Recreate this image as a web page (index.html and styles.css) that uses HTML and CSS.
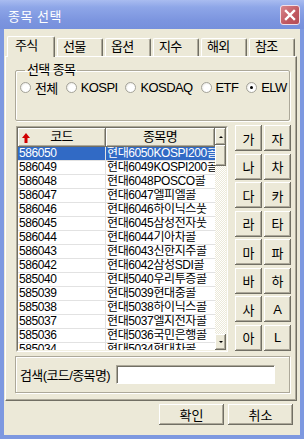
FILE: index.html
```html
<!DOCTYPE html>
<html lang="ko">
<head>
  <meta charset="UTF-8" />
  <meta name="viewport" content="width=device-width, initial-scale=1.0"/>
  <title>종목 선택</title>
  <link rel="stylesheet" href="styles.css">
</head>
<body>
<div class="window">
  <div class="titlebar">
    <span class="title">종목 선택</span>
    <span class="close">
      <svg width="12" height="12" viewBox="0 0 12 12"><path d="M2 2L10 10M10 2L2 10" stroke="#fff" stroke-width="2.4" stroke-linecap="square"/></svg>
    </span>
  </div>

  <div class="client">
    <div class="tabs">
      <div class="tab active">주식</div>
      <div class="tab">선물</div>
      <div class="tab">옵션</div>
      <div class="tab">지수</div>
      <div class="tab">해외</div>
      <div class="tab">참조</div>
    </div>

    <div class="panel">
      <fieldset class="group">
        <legend>선택 종목</legend>
        <div class="radios">
          <label class="radio"><span class="dot"></span>전체</label>
          <label class="radio"><span class="dot"></span>KOSPI</label>
          <label class="radio"><span class="dot"></span>KOSDAQ</label>
          <label class="radio"><span class="dot"></span>ETF</label>
          <label class="radio"><span class="dot on"></span>ELW</label>
        </div>
      </fieldset>

      <div class="list-area">
        <div class="list">
          <div class="list-inner">
            <div class="grid">
              <div class="head">
                <div class="hcell code">
                  <svg class="sort" width="8" height="10" viewBox="0 0 8 10"><path d="M4 0L8 5H5.5V10H2.5V5H0Z" fill="#d00000"/></svg>
                  코드
                </div>
                <div class="hcell name">종목명</div>
              </div>
              <div class="rows" id="rows"></div>
            </div>
            <div class="vscroll">
              <div class="sbtn up"></div>
              <div class="thumb"></div>
              <div class="track"></div>
              <div class="sbtn down"></div>
            </div>
          </div>
        </div>
        <div class="keys" id="keys"></div>
      </div>

      <div class="search">
        <span class="search-label">검색(코드/종목명)</span>
        <input type="text" class="search-input">
      </div>
    </div>

    <div class="actions">
      <button class="btn">확인</button>
      <button class="btn">취소</button>
    </div>
  </div>
</div>

<script>
  const items = [
    ['586050', '현대6050KOSPI200콜'],
    ['586049', '현대6049KOSPI200콜'],
    ['586048', '현대6048POSCO콜'],
    ['586047', '현대6047엘피엘콜'],
    ['586046', '현대6046하이닉스풋'],
    ['586045', '현대6045삼성전자풋'],
    ['586044', '현대6044기아차콜'],
    ['586043', '현대6043신한지주콜'],
    ['586042', '현대6042삼성SDI콜'],
    ['585040', '현대5040우리투증콜'],
    ['585039', '현대5039현대중콜'],
    ['585038', '현대5038하이닉스콜'],
    ['585037', '현대5037엘지전자콜'],
    ['585036', '현대5036국민은행콜'],
    ['585034', '현대5034현대차콜']
  ];

  const keys = ['가', '자', '나', '차', '다', '카', '라', '타', '마', '파', '바', '하', '사', 'A', '아', 'L'];

  const rows = document.getElementById('rows');
  items.forEach((item, i) => {
    const row = document.createElement('div');
    row.className = i === 0 ? 'row selected' : 'row';
    row.innerHTML = `<div class="cell code">${item[0]}</div><div class="cell name">${item[1]}</div>`;
    rows.appendChild(row);
  });

  const keyBox = document.getElementById('keys');
  keys.forEach(k => {
    const b = document.createElement('button');
    b.className = 'key';
    b.textContent = k;
    keyBox.appendChild(b);
  });
</script>
</body>
</html>
```

FILE: styles.css
```css
* {
  box-sizing: border-box;
  margin: 0;
  padding: 0;
}

body {
  font-family: 'Liberation Sans', 'Noto Sans CJK KR', sans-serif;
  font-size: 13px;
  letter-spacing: -0.6px;
  color: #000;
  background: #7a96df;
}

.window {
  width: 304px;
  height: 439px;
  display: flex;
  flex-direction: column;
  background: #7d98e0;
}

.titlebar {
  height: 29px;
  display: flex;
  align-items: center;
  justify-content: space-between;
  padding: 1px 4px 0 8px;
  background: linear-gradient(#a9bcf0, #8ea6e8 25%, #7c95df 70%, #7690dc);
}

.title {
  font-family: 'Noto Sans CJK KR', sans-serif;
  font-size: 13px;
  color: #fff;
  letter-spacing: 0.5px;
}

.close {
  width: 20px;
  height: 20px;
  display: flex;
  align-items: center;
  justify-content: center;
  border: 1px solid #f0e0e8;
  border-radius: 3px;
  background: linear-gradient(135deg, #d8868c, #c0575f 60%, #b44c56);
}

.client {
  flex: 1;
  margin: 0 4px 4px;
  padding: 7px 0 0 1px;
  background: #ece9d8;
  display: flex;
  flex-direction: column;
}

/* tabs */
.tabs {
  display: flex;
  align-items: flex-end;
  height: 20px;
  margin-left: 2px;
  position: relative;
  z-index: 1;
}

.tab {
  width: 46px;
  height: 18px;
  margin-left: 2px;
  padding-left: 5px;
  line-height: 16px;
  border: 1px solid;
  border-color: #fff #716f64 transparent #fff;
  border-bottom: none;
  border-radius: 2px 2px 0 0;
  box-shadow: inset -1px 0 #aca899;
  background: #ece9d8;
}

.tab.active {
  width: 48px;
  height: 21px;
  margin-left: 0;
  margin-bottom: -1px;
  padding-left: 7px;
  line-height: 18px;
}

.panel {
  width: 292px;
  height: 345px;
  border: 1px solid;
  border-color: #fff #716f64 #716f64 #fff;
  box-shadow: inset -1px -1px #aca899;
  padding: 6px 0 0 9px;
}

/* group box */
.group {
  width: 275px;
  height: 58px;
  border: 1px solid #aca899;
  border-radius: 2px;
  box-shadow: inset 1px 1px #fff, 1px 1px #fff;
  padding: 3px 0 0 4px;
}

.group legend {
  margin-left: 5px;
  padding: 0 2px;
  line-height: 14px;
}

.radios {
  display: flex;
  gap: 8px;
}

.radio {
  display: flex;
  align-items: center;
  gap: 4px;
  height: 14px;
}

.dot {
  width: 11px;
  height: 11px;
  border-radius: 50%;
  border: 1px solid #a4a39a;
  background: radial-gradient(circle at 60% 60%, #fff 45%, #dcdad0);
  display: flex;
  align-items: center;
  justify-content: center;
}

.dot.on::after {
  content: '';
  width: 3px;
  height: 3px;
  border-radius: 50%;
  background: #000;
}

/* list */
.list-area {
  display: flex;
  align-items: flex-start;
  margin-top: 4px;
}

.list {
  width: 212px;
  height: 226px;
  margin: 1px 0 0 1px;
  border: 1px solid;
  border-color: #aca899 #fff #fff #aca899;
}

.list-inner {
  height: 100%;
  display: flex;
  border: 1px solid;
  border-color: #716f64 #f1efe2 #f1efe2 #716f64;
  background: #fff;
}

.grid {
  width: 197px;
  overflow: hidden;
}

.head {
  display: flex;
  height: 19px;
}

.hcell {
  position: relative;
  height: 19px;
  line-height: 18px;
  text-align: center;
  background: #ece9d8;
  border-right: 1px solid #716f64;
  border-bottom: 1px solid #716f64;
  box-shadow: inset 1px 1px #fff, inset -1px -1px #aca899;
}

.hcell.code {
  width: 88px;
}

.hcell.name {
  width: 109px;
}

.sort {
  position: absolute;
  left: 4px;
  top: 5px;
}

.row {
  display: flex;
  height: 14px;
  font-size: 12px;
  line-height: 13px;
  border-bottom: 1px solid #e2e2e2;
  white-space: nowrap;
  letter-spacing: -0.4px;
}

.cell.code {
  width: 88px;
  padding-left: 1px;
  border-right: 1px solid #e2e2e2;
}

.cell.name {
  width: 109px;
  padding-left: 1px;
  overflow: hidden;
}

.row.selected {
  background: #316ac5;
  color: #fff;
}

/* scrollbar */
.vscroll {
  width: 11px;
  display: flex;
  flex-direction: column;
}

.sbtn,
.thumb {
  background: #ece9d8;
  box-shadow: inset -1px -1px #716f64, inset 1px 1px #fff, inset -2px -2px #aca899;
}

.sbtn {
  display: flex;
  align-items: center;
  justify-content: center;
}

.sbtn.up {
  height: 17px;
}

.sbtn.down {
  height: 16px;
}

.sbtn.up::before {
  content: '';
  border-left: 2px solid transparent;
  border-right: 2px solid transparent;
  border-bottom: 2px solid #000;
}

.sbtn.down::before {
  content: '';
  border-left: 2px solid transparent;
  border-right: 2px solid transparent;
  border-top: 2px solid #000;
}

.thumb {
  height: 21px;
}

.track {
  flex: 1;
  background: repeating-conic-gradient(#fff 0 25%, #ece9d8 0 50%) 0 0 / 2px 2px;
}

/* letter keys */
.keys {
  display: grid;
  grid-template-columns: 27px 27px;
  grid-template-rows: repeat(8, 26px);
  column-gap: 2px;
  row-gap: 2.5px;
  margin-left: 7px;
}

.key,
.btn {
  font-family: 'Liberation Sans', 'Noto Sans CJK KR', sans-serif;
  font-size: 13px;
  color: #000;
  background: #ece9d8;
  border: none;
  box-shadow: inset -1px -1px #716f64, inset 1px 1px #fff, inset -2px -2px #aca899;
}

/* search */
.search {
  width: 275px;
  height: 37px;
  margin-top: 4px;
  display: flex;
  align-items: center;
  gap: 6px;
  padding-left: 4px;
  border: 1px solid #aca899;
  box-shadow: inset 1px 1px #fff, 1px 1px #fff;
}

.search-input {
  width: 159px;
  height: 19px;
  border: 1px solid;
  border-color: #aca899 #fff #fff #aca899;
  box-shadow: inset 1px 1px #716f64;
  background: #fff;
}

.actions {
  display: flex;
  justify-content: flex-end;
  gap: 4px;
  margin-top: 3px;
  padding-right: 7px;
}

.btn {
  width: 65px;
  height: 21px;
}
```
